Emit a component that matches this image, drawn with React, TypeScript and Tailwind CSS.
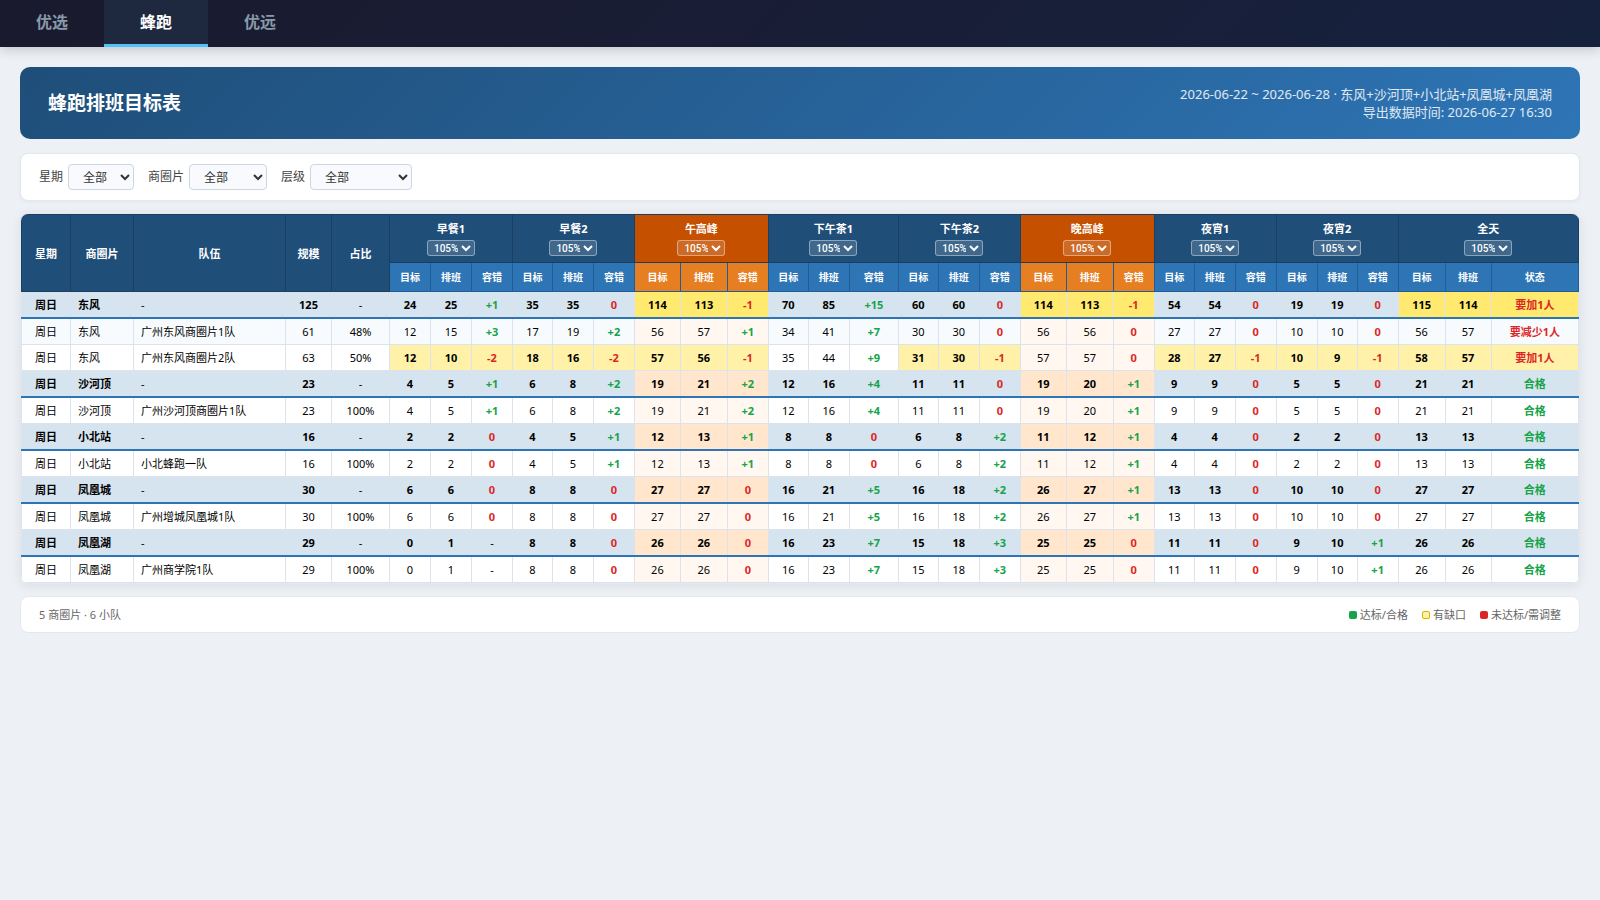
import { useState } from 'react'
import { clsx } from 'clsx'

type Period = {
  id: string
  label: string
  peak?: boolean
}

type Row = {
  area: string
  team: string
  size: number
  share: string
  // target / scheduled pairs, one per period
  cells: [number, number][]
  total: [number, number]
  status: string
  summary?: boolean
}

const PERIODS: Period[] = [
  { id: 'breakfast1', label: '早餐1' },
  { id: 'breakfast2', label: '早餐2' },
  { id: 'noon', label: '午高峰', peak: true },
  { id: 'tea1', label: '下午茶1' },
  { id: 'tea2', label: '下午茶2' },
  { id: 'evening', label: '晚高峰', peak: true },
  { id: 'night1', label: '夜宵1' },
  { id: 'night2', label: '夜宵2' },
]

const COLUMN_WIDTHS = [
  49, 63, 152, 46, 58,
  41, 41, 41,
  40, 41, 41,
  46, 47, 41,
  40, 41, 49,
  40, 41, 41,
  46, 47, 41,
  40, 41, 41,
  41, 40, 41,
  47, 46, 87,
]
const TOTAL_WIDTH = COLUMN_WIDTHS.reduce((sum, w) => sum + w, 0)

const ROWS: Row[] = [
  { area: '东风', team: '-', size: 125, share: '-', cells: [[24, 25], [35, 35], [114, 113], [70, 85], [60, 60], [114, 113], [54, 54], [19, 19]], total: [115, 114], status: '要加1人', summary: true },
  { area: '东风', team: '广州东风商圈片1队', size: 61, share: '48%', cells: [[12, 15], [17, 19], [56, 57], [34, 41], [30, 30], [56, 56], [27, 27], [10, 10]], total: [56, 57], status: '要减少1人' },
  { area: '东风', team: '广州东风商圈片2队', size: 63, share: '50%', cells: [[12, 10], [18, 16], [57, 56], [35, 44], [31, 30], [57, 57], [28, 27], [10, 9]], total: [58, 57], status: '要加1人' },
  { area: '沙河顶', team: '-', size: 23, share: '-', cells: [[4, 5], [6, 8], [19, 21], [12, 16], [11, 11], [19, 20], [9, 9], [5, 5]], total: [21, 21], status: '合格', summary: true },
  { area: '沙河顶', team: '广州沙河顶商圈片1队', size: 23, share: '100%', cells: [[4, 5], [6, 8], [19, 21], [12, 16], [11, 11], [19, 20], [9, 9], [5, 5]], total: [21, 21], status: '合格' },
  { area: '小北站', team: '-', size: 16, share: '-', cells: [[2, 2], [4, 5], [12, 13], [8, 8], [6, 8], [11, 12], [4, 4], [2, 2]], total: [13, 13], status: '合格', summary: true },
  { area: '小北站', team: '小北蜂跑一队', size: 16, share: '100%', cells: [[2, 2], [4, 5], [12, 13], [8, 8], [6, 8], [11, 12], [4, 4], [2, 2]], total: [13, 13], status: '合格' },
  { area: '凤凰城', team: '-', size: 30, share: '-', cells: [[6, 6], [8, 8], [27, 27], [16, 21], [16, 18], [26, 27], [13, 13], [10, 10]], total: [27, 27], status: '合格', summary: true },
  { area: '凤凰城', team: '广州增城凤凰城1队', size: 30, share: '100%', cells: [[6, 6], [8, 8], [27, 27], [16, 21], [16, 18], [26, 27], [13, 13], [10, 10]], total: [27, 27], status: '合格' },
  { area: '凤凰湖', team: '-', size: 29, share: '-', cells: [[0, 1], [8, 8], [26, 26], [16, 23], [15, 18], [25, 25], [11, 11], [9, 10]], total: [26, 26], status: '合格', summary: true },
  { area: '凤凰湖', team: '广州商学院1队', size: 29, share: '100%', cells: [[0, 1], [8, 8], [26, 26], [16, 23], [15, 18], [25, 25], [11, 11], [9, 10]], total: [26, 26], status: '合格' },
]

const FONT = "font-['Noto_Sans','Noto_Sans_CJK_SC',sans-serif]"

const TABS = ['优选', '蜂跑', '优远']

function NavTabs() {
  const [active, setActive] = useState('蜂跑')
  return (
    <nav className="relative flex bg-linear-135 from-[#1a1a2e] to-[#16213e] shadow-[0_2px_12px_rgba(0,0,0,0.2)]">
      {TABS.map((tab) => (
        <button
          key={tab}
          type="button"
          onClick={() => setActive(tab)}
          className={clsx(
            'h-[47px] border-b-3 px-9 text-base font-bold',
            tab === active
              ? 'border-[#4fc3f7] bg-[#1e293f] text-white'
              : 'border-transparent text-[#8899aa]'
          )}
        >
          {tab}
        </button>
      ))}
    </nav>
  )
}

function FilterSelect({ id, label, options, width }: { id: string; label: string; options: string[]; width: string }) {
  return (
    <div className="flex items-center gap-[5px]">
      <label htmlFor={id} className="text-[#444]">{label}</label>
      <select id={id} className={clsx('h-[26px] rounded border border-[#ccd5e3] bg-[#f9fafd] px-2.5 text-[#333]', width)}>
        {options.map((option) => (
          <option key={option}>{option}</option>
        ))}
      </select>
    </div>
  )
}

function RateSelect({ label }: { label: string }) {
  return (
    <select
      aria-label={`${label}比例`}
      defaultValue="105%"
      className="block mx-auto mt-1 h-4 w-12 rounded-[3px] border border-white/40 bg-white/15 pl-0.5 font-[Roboto,sans-serif] text-[10px] font-medium text-white"
    >
      {['100%', '105%', '110%', '115%', '120%'].map((rate) => (
        <option key={rate} className="text-black">{rate}</option>
      ))}
    </select>
  )
}

const MAIN_TH = 'border border-[#1a3f62] bg-[#1f4e79]'

function TableHead() {
  return (
    <thead className="text-white">
      <tr>
        {['星期', '商圈片', '队伍', '规模', '占比'].map((title) => (
          <th key={title} rowSpan={2} className={clsx(MAIN_TH, 'pt-0.5')}>{title}</th>
        ))}
        {PERIODS.map((period) => (
          <th
            key={period.id}
            colSpan={3}
            className={clsx('border border-[#1a3f62] py-1.5 leading-[15px]', period.peak ? 'bg-[#c55000]' : 'bg-[#1f4e79]')}
          >
            {period.label}
            <RateSelect label={period.label} />
          </th>
        ))}
        <th colSpan={3} className={clsx(MAIN_TH, 'py-1.5 leading-[15px]')}>
          全天
          <RateSelect label="全天" />
        </th>
      </tr>
      <tr className="text-[10px]">
        {PERIODS.map((period) =>
          ['目标', '排班', '容错'].map((title) => (
            <th
              key={period.id + title}
              className={clsx('h-[29px] border border-[#205c96]', period.peak ? 'bg-[#e67e22]' : 'bg-[#2e75b6]')}
            >
              {title}
            </th>
          ))
        )}
        {['目标', '排班', '状态'].map((title) => (
          <th key={title} className="h-[29px] border border-[#205c96] bg-[#2e75b6]">{title}</th>
        ))}
      </tr>
    </thead>
  )
}

function DiffText({ target, actual }: { target: number; actual: number }) {
  // no meaningful tolerance when nothing is targeted
  if (target === 0) return <>-</>
  const diff = actual - target
  return (
    <span className={clsx('font-bold', diff > 0 ? 'text-[#16a34a]' : 'text-[#dc2626]')}>
      {diff > 0 ? `+${diff}` : diff}
    </span>
  )
}

function BodyRow({ row, striped }: { row: Row; striped: boolean }) {
  const base = clsx(
    'border border-[#dde3ec] px-[7px] py-1 leading-[17px]',
    row.summary && 'border-b-2 border-b-[#2e75b6]'
  )
  const cellBg = (short: boolean, peak?: boolean) => {
    if (short) return row.summary ? 'bg-[#ffe96e] font-bold' : 'bg-[#fff2a8] font-bold'
    if (peak) return row.summary ? 'bg-[#ffe6cc]' : 'bg-[#fff7f0]'
    return ''
  }
  const totalBg = cellBg(row.total[1] < row.total[0])

  return (
    <tr className={row.summary ? 'bg-[#d6e4ef]' : striped ? 'bg-[#f7fbfe]' : 'bg-white'}>
      <td className={clsx(base, row.summary && 'font-bold')}>周日</td>
      <td className={clsx(base, 'text-left', row.summary && 'font-bold')}>{row.area}</td>
      <td className={clsx(base, 'text-left')}>{row.team}</td>
      <td className={clsx(base, row.summary && 'font-bold')}>{row.size}</td>
      <td className={base}>{row.share}</td>
      {row.cells.map(([target, actual], i) => {
        const bg = cellBg(actual < target, PERIODS[i].peak)
        return [
          <td key={`${i}-target`} className={clsx(base, bg, row.summary && 'font-bold')}>{target}</td>,
          <td key={`${i}-actual`} className={clsx(base, bg, row.summary && 'font-bold')}>{actual}</td>,
          <td key={`${i}-diff`} className={clsx(base, bg)}>
            <DiffText target={target} actual={actual} />
          </td>,
        ]
      })}
      <td className={clsx(base, totalBg, row.summary && 'font-bold')}>{row.total[0]}</td>
      <td className={clsx(base, totalBg, row.summary && 'font-bold')}>{row.total[1]}</td>
      <td className={clsx(base, totalBg, 'font-bold', row.status === '合格' ? 'text-[#16a34a]' : 'text-[#dc2626]')}>
        {row.status}
      </td>
    </tr>
  )
}

function LegendItem({ color, label }: { color: string; label: string }) {
  return (
    <span className="flex items-center gap-[3px]">
      <span className={clsx('size-2 rounded-[2px]', color)} />
      {label}
    </span>
  )
}

export default function App() {
  return (
    <div className={clsx('min-h-screen bg-[#edf1f6] text-[11px] text-black', FONT)}>
      <NavTabs />
      <main className="p-5">
        <header className="flex h-[72px] items-center justify-between rounded-[10px] bg-linear-135 from-[#1f4e79] to-[#2e75b6] px-7 text-white">
          <h1 className="text-[19px] font-bold">蜂跑排班目标表</h1>
          <div className="text-right text-[13px] leading-[18px] text-white/85">
            <p>2026-06-22 ~ 2026-06-28 · 东风+沙河顶+小北站+凤凰城+凤凰湖</p>
            <p>导出数据时间: 2026-06-27 16:30</p>
          </div>
        </header>

        <section className="mt-3.5 flex items-center gap-3.5 rounded-lg border border-[#e2e8f0] bg-white px-[18px] py-[10px] text-xs shadow-[0_1px_4px_rgba(0,0,0,0.04)]">
          <FilterSelect id="weekday" label="星期" options={['全部', '周日']} width="w-[66px]" />
          <FilterSelect id="area" label="商圈片" options={['全部', '东风', '沙河顶', '小北站', '凤凰城', '凤凰湖']} width="w-[78px]" />
          <FilterSelect id="level" label="层级" options={['全部', '商圈片', '小队']} width="w-[102px]" />
        </section>

        <section className="mt-3 overflow-hidden rounded-lg border border-[#e2e8f0] bg-white shadow-[0_2px_12px_rgba(0,0,0,0.08)]">
          <table className="w-full table-fixed border-collapse text-center">
            <colgroup>
              {COLUMN_WIDTHS.map((w, i) => (
                <col key={i} style={{ width: `${(w / TOTAL_WIDTH) * 100}%` }} />
              ))}
            </colgroup>
            <TableHead />
            <tbody>
              {ROWS.map((row, i) => (
                <BodyRow key={i} row={row} striped={i === 1} />
              ))}
            </tbody>
          </table>
        </section>

        <footer className="mt-3 flex items-center justify-between rounded-lg border border-[#e2e8f0] bg-white px-[18px] py-2 leading-[19px] text-[#666]">
          <span>5 商圈片 · 6 小队</span>
          <div className="flex gap-3.5">
            <LegendItem color="bg-[#16a34a]" label="达标/合格" />
            <LegendItem color="border border-[#d4b800] bg-[#fff2a8]" label="有缺口" />
            <LegendItem color="bg-[#dc2626]" label="未达标/需调整" />
          </div>
        </footer>
      </main>
    </div>
  )
}
